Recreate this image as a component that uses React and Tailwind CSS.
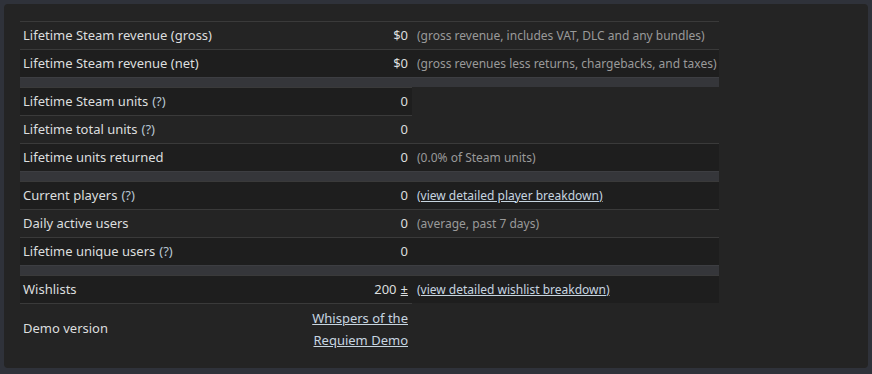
const rows = [
  { label: 'Lifetime Steam revenue (gross)', value: '$0', note: '(gross revenue, includes VAT, DLC and any bundles)' },
  { label: 'Lifetime Steam revenue (net)', value: '$0', note: '(gross revenues less returns, chargebacks, and taxes)' },
  { spacer: true },
  { label: 'Lifetime Steam units', help: true, value: '0' },
  { label: 'Lifetime total units', help: true, value: '0' },
  { label: 'Lifetime units returned', value: '0', note: '(0.0% of Steam units)' },
  { spacer: true },
  { label: 'Current players', help: true, value: '0', link: '(view detailed player breakdown)' },
  { label: 'Daily active users', value: '0', note: '(average, past 7 days)' },
  { label: 'Lifetime unique users', help: true, value: '0', empty: true },
  { spacer: true },
  { label: 'Wishlists', value: '200', plus: true, link: '(view detailed wishlist breakdown)' },
  { label: 'Demo version', demo: 'Whispers of the Requiem Demo' },
];

export default function App() {
  return (
    <div className="min-h-screen bg-[#2f323a] p-1" style={{ fontFamily: '"Noto Sans", Arial, sans-serif' }}>
      <div className="h-[364px] rounded bg-[#242424] pt-[17px] px-4 text-[13px] text-[#dcdedf]">
        <div className="flex flex-col w-[699px]">
          {rows.map((r, i) => {
            if (r.spacer) {
              return <div key={i} className="h-[10px] bg-[#35363a] border-t border-[#3d3e42]" />;
            }
            const dark = (i + 1) % 2 === 0;
            const bg = dark ? 'bg-[#1e1e1e]' : 'bg-[#242424]';
            const third = r.note || r.link || r.empty;
            return (
              <div key={i} className="flex items-stretch">
                <div className={`w-[288px] border-t border-[#3a3a3a] px-[3px] flex items-center ${bg} ${r.demo ? 'h-[51px]' : 'h-[28px]'}`}>
                  {r.label}
                  {r.help && <span className="ml-1 text-[#b8c6d2]">(?)</span>}
                </div>
                <div className={`w-[104px] border-t border-[#3a3a3a] pr-[4px] flex items-center justify-end text-right ${bg}`}>
                  {r.value}
                  {r.plus && <span className="ml-1 underline">±</span>}
                  {r.demo && (
                    <a href="#" className="underline leading-[22px] text-[#c7d5e0]">{r.demo}</a>
                  )}
                </div>
                {third && (
                  <div className={`w-[307px] border-t border-[#3a3a3a] pl-[5px] flex items-center whitespace-nowrap text-[12px] ${bg}`}>
                    {r.note && <span className="text-[#9a9a9a]">{r.note}</span>}
                    {r.link && <a href="#" className="underline text-[#c7d5e0]">{r.link}</a>}
                  </div>
                )}
              </div>
            );
          })}
        </div>
      </div>
    </div>
  );
}
